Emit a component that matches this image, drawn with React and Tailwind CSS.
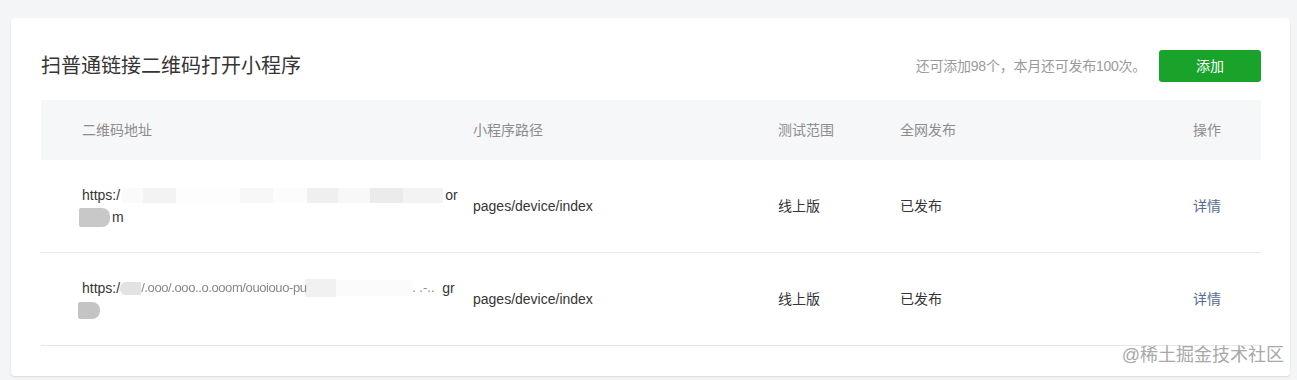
import React from "react";

const font = { fontFamily: '"Liberation Sans", "Noto Sans CJK SC", sans-serif' };

function Url1() {
  return (
    <div className="flex flex-col">
      <div className="flex h-[22px] items-center">
        <span>https:/</span>
        <span className="ml-[2px] h-[15px] w-[21px] bg-[#fafafa]" />
        <span className="h-[15px] w-[33px] bg-[#f3f3f3]" />
        <span className="h-[15px] w-[64px] bg-[#fdfdfd]" />
        <span className="h-[15px] w-[33px] bg-[#f7f7f7]" />
        <span className="h-[15px] w-[34px] bg-[#fcfcfc]" />
        <span className="h-[15px] w-[31px] bg-[#efefef]" />
        <span className="h-[15px] w-[32px] bg-[#f8f8f8]" />
        <span className="h-[15px] w-[33px] bg-[#ebebeb]" />
        <span className="h-[15px] w-[40px] bg-[#f3f3f3]" />
        <span className="ml-[2px]">or</span>
      </div>
      <div className="flex h-[22px] items-center">
        <span className="-ml-[3px] h-[19px] w-[31px] rounded-r-[8px] rounded-l-[2px] bg-[#c8c8c8]" />
        <span className="ml-[2px]">m</span>
      </div>
    </div>
  );
}

function Url2() {
  return (
    <div className="flex flex-col">
      <div className="flex h-[22px] items-center">
        <span>https:/</span>
        <span className="h-[13px] w-[21px] rounded-l-[6px] bg-[#e2e2e2]" />
        <span className="w-[164px] whitespace-nowrap text-[13px] tracking-[-0.4px] text-[#888] blur-[0.7px]">/.ooo/.ooo..o.ooom/ouoiouo-pu</span>
        <span className="h-[18px] w-[31px] bg-[#f1f1f1]" />
        <span className="h-[16px] w-[76px] bg-[#fbfbfb]" />
        <span className="w-[30px] whitespace-nowrap text-[13px] text-[#888] blur-[0.6px]">. .-..</span>
        <span>gr</span>
      </div>
      <div className="flex h-[22px] items-center">
        <span className="-ml-[4px] h-[17px] w-[22px] rounded-r-[8px] rounded-l-[2px] bg-[#c4c4c4]" />
      </div>
    </div>
  );
}

function Row({ url }) {
  return (
    <div className="flex h-[93px] items-center border-b border-[#e7e7e7] text-[14px] text-[#353535]">
      <div className="w-[432px] shrink-0 pl-[41px]">{url}</div>
      <div className="w-[305px] shrink-0">pages/device/index</div>
      <div className="w-[122px] shrink-0">线上版</div>
      <div className="flex-1">已发布</div>
      <div className="w-[68px] shrink-0 text-[#576b95]">详情</div>
    </div>
  );
}

export default function App() {
  return (
    <div className="relative h-[380px] w-[1297px] overflow-hidden bg-[#f4f5f7]" style={font}>
      <div className="ml-[11px] mt-[18px] w-[1279px] rounded-[4px] bg-white px-[30px] pb-[30px] pt-[32px] pr-[29px] shadow-[0_1px_2px_rgba(0,0,0,0.12)]">
        <div className="flex h-[32px] items-center justify-between">
          <div className="text-[20px] text-[#353535]">扫普通链接二维码打开小程序</div>
          <div className="flex items-center">
            <span className="mr-[13px] text-[14px] tracking-[-0.25px] text-[#9a9a9a]">还可添加98个，本月还可发布100次。</span>
            <button className="h-[32px] w-[102px] rounded-[3px] bg-[#1aa32b] text-[14px] text-white">添加</button>
          </div>
        </div>
        <div className="mt-[18px]">
          <div className="flex h-[60px] items-center bg-[#f6f7f9] text-[14px] text-[#8d8d8d]">
            <div className="w-[432px] shrink-0 pl-[41px]">二维码地址</div>
            <div className="w-[305px] shrink-0">小程序路径</div>
            <div className="w-[122px] shrink-0">测试范围</div>
            <div className="flex-1">全网发布</div>
            <div className="w-[68px] shrink-0">操作</div>
          </div>
          <Row url={<Url1 />} />
          <Row url={<Url2 />} />
        </div>
      </div>
      <div className="absolute right-[13px] top-[344px] text-[18px] leading-[22px] text-[#a8a8a8] [text-shadow:0_0_1px_#fff]">
        @稀土掘金技术社区
      </div>
    </div>
  );
}
